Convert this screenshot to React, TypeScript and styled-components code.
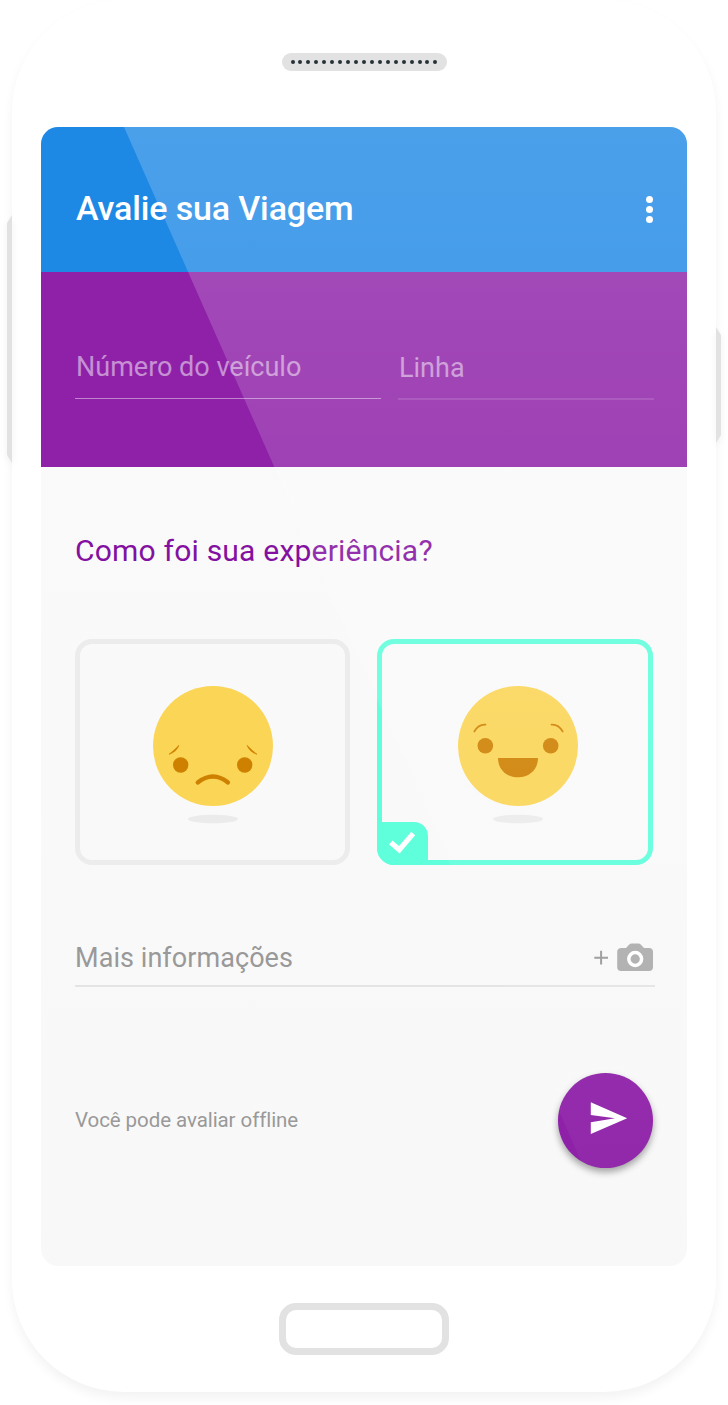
import React from 'react';
import styled, { createGlobalStyle, css } from 'styled-components';

const GlobalStyle = createGlobalStyle`
  *, *::before, *::after { box-sizing: border-box; }
  body {
    margin: 0;
    background: #fff;
    font-family: Roboto, "Liberation Sans", sans-serif;
  }
  h1, h2, p { margin: 0; font-weight: 400; }
  button { font: inherit; border: 0; padding: 0; background: none; }
`;

const Stage = styled.main`
  width: 728px;
  height: 1405px;
  padding: 0 12px;
  overflow: hidden;
`;

const Phone = styled.div`
  position: relative;
  width: 704px;
  height: 1392px;
  padding: 53px 29px 0;
  display: flex;
  flex-direction: column;
  align-items: center;
  background: #fff;
  border-radius: 112px;
  box-shadow: 0 6px 11px rgba(0, 0, 0, 0.05);
`;

const SideKey = styled.span<{ $side: 'left' | 'right'; $top: number; $height: number }>`
  position: absolute;
  top: ${p => p.$top}px;
  ${p => p.$side}: -5px;
  width: 5px;
  height: ${p => p.$height}px;
  filter: drop-shadow(0 3px 3px rgba(0, 0, 0, 0.05));

  &::before {
    content: '';
    display: block;
    height: 100%;
    background: #e2e2e2;
    clip-path: ${p =>
      p.$side === 'left'
        ? 'polygon(0 8px, 100% 0, 100% 100%, 0 calc(100% - 8px))'
        : 'polygon(0 0, 100% 8px, 100% calc(100% - 8px), 0 100%)'};
  }
`;

const Speaker = styled.div`
  width: 165px;
  height: 18px;
  padding: 0 9px;
  display: flex;
  align-items: center;
  justify-content: space-between;
  background: #e2e2e2;
  border-radius: 9px;
`;

const SpeakerHole = styled.i`
  width: 4px;
  height: 4px;
  background: #263238;
  border-radius: 50%;
`;

const Screen = styled.div`
  position: relative;
  width: 646px;
  height: 1139px;
  margin-top: 56px;
  display: flex;
  flex-direction: column;
  background: linear-gradient(#fafafa, #f9f9f9 60%, #f8f8f8);
  border-radius: 17px;
  overflow: hidden;
`;

const Gloss = styled.div`
  position: absolute;
  inset: 0;
  pointer-events: none;
  background: linear-gradient(rgba(255, 255, 255, 0.2), rgba(255, 255, 255, 0.02));
  clip-path: polygon(83px 0, 100% 0, 100% 100%, 586.5px 100%);
`;

const AppBar = styled.header`
  height: 145px;
  flex: none;
  padding: 18px 34px 0 35px;
  display: flex;
  align-items: center;
  justify-content: space-between;
  background: #1e88e5;
`;

const Title = styled.h1`
  margin-bottom: 2px;
  color: #fff;
  font-size: 34px;
  line-height: 40px;
  font-weight: 500;
  letter-spacing: -0.14px;
`;

const MenuButton = styled.button`
  display: flex;
  flex-direction: column;
  gap: 3px;
  margin-top: 1px;
`;

const MenuDot = styled.i`
  width: 7px;
  height: 7px;
  background: #fff;
  border-radius: 50%;
`;

const VehicleForm = styled.section`
  height: 195px;
  flex: none;
  padding: 77px 33px 0 34px;
  display: grid;
  grid-template-columns: 306px 256px;
  justify-content: space-between;
  align-items: start;
  background: #8e21a8;
`;

const Field = styled.div<{ $faint?: boolean }>`
  height: ${p => (p.$faint ? 51 : 50)}px;
  padding: ${p => (p.$faint ? 1 : 0)}px 0 0 1px;
  color: rgba(255, 255, 255, 0.5);
  font-size: 27px;
  line-height: 36px;
  border-bottom: ${p => (p.$faint ? '2px solid rgba(255,255,255,0.13)' : '1px solid rgba(255,255,255,0.45)')};
`;

const Content = styled.section`
  flex: 1;
  padding: 65px 34px 0;
  display: flex;
  flex-direction: column;
`;

const Question = styled.h2`
  color: #8310a0;
  font-size: 30px;
  line-height: 38px;
  letter-spacing: 0.21px;
`;

const Ratings = styled.div`
  margin-top: 69px;
  display: flex;
  gap: 27px;
`;

const RatingCard = styled.button<{ $selected?: boolean }>`
  position: relative;
  width: 275px;
  height: 226px;
  padding-top: 42px;
  display: flex;
  justify-content: center;
  align-items: flex-start;
  border: 5px solid #ececec;
  border-radius: 17px;
  ${p =>
    p.$selected &&
    css`
      width: 276px;
      padding-left: 6px;
      border-color: #5fffdc;
    `}
`;

const SelectedBadge = styled.span`
  position: absolute;
  left: -5px;
  bottom: -5px;
  width: 51px;
  height: 43px;
  background: #5fffdc;
  border-radius: 0 14px 0 17px;
`;

const NoteField = styled.div`
  height: 51px;
  margin-top: 71px;
  width: 580px;
  padding-right: 2px;
  display: flex;
  align-items: flex-start;
  justify-content: space-between;
  color: #999;
  font-size: 27px;
  line-height: 44px;
  letter-spacing: 0.06px;
  border-bottom: 2px solid #e4e4e4;
`;

const AttachPhoto = styled.button`
  height: 41px;
  display: flex;
  align-items: center;
`;

const SendRow = styled.footer`
  margin-top: 86px;
  display: flex;
  align-items: center;
  justify-content: space-between;
`;

const Hint = styled.p`
  margin-bottom: 1px;
  color: #999;
  font-size: 20.5px;
  line-height: 28px;
  letter-spacing: -0.07px;
  font-variant-ligatures: none;
`;

const SendButton = styled.button`
  width: 95px;
  height: 95px;
  background: #8e21a8;
  border-radius: 50%;
  box-shadow: 0 4px 7px rgba(0, 0, 0, 0.36);
`;

const HomeButton = styled.div`
  width: 170px;
  height: 52px;
  margin-top: 37px;
  border: 7px solid #e2e2e2;
  border-radius: 17px;
`;

const Drawing = styled.svg`
  display: block;
  flex: none;
`;

const SadFace = () => (
  <Drawing width="120" height="140" viewBox="0 0 120 140">
    <circle cx="60" cy="60" r="60" fill="#fbd556" />
    <circle cx="27.7" cy="79" r="7.7" fill="#ce8000" />
    <circle cx="91.7" cy="79" r="7.7" fill="#ce8000" />
    <path
      d="M16 68.3 Q20.5 65 26 59.3 Q23.5 66 16 68.3Z M104 68.3 Q99.5 65 94 59.3 Q96.5 66 104 68.3Z"
      fill="#ce8000"
      stroke="#ce8000"
      strokeWidth=".6"
    />
    <path d="M44.7 96.5 Q60 84.5 75 96.5" fill="none" stroke="#ce8000" strokeWidth="4.2" strokeLinecap="round" />
    <ellipse cx="60" cy="133" rx="25" ry="4.3" fill="#ebebeb" />
  </Drawing>
);

const HappyFace = () => (
  <Drawing width="120" height="140" viewBox="0 0 120 140">
    <circle cx="60" cy="60" r="60" fill="#fbd556" />
    <circle cx="27.3" cy="59.7" r="7.8" fill="#ce8000" />
    <circle cx="92.7" cy="59.7" r="7.8" fill="#ce8000" />
    <path
      d="M16.3 45.5 Q20.5 38 27.5 38.6 M104.7 45.5 Q100.5 38 93.5 38.6"
      fill="none"
      stroke="#ce8000"
      strokeWidth="1.7"
      strokeLinecap="round"
    />
    <path d="M40 72 H80 C80 83.5 71.5 91.3 60 91.3 C48.5 91.3 40 83.5 40 72Z" fill="#ce8000" />
    <ellipse cx="60" cy="133" rx="25" ry="4.3" fill="#ebebeb" />
  </Drawing>
);

const CheckIcon = () => (
  <Drawing width="51" height="43" viewBox="0 0 51 43">
    <path d="M13.8 20.5 L22.3 27.8 L36.2 11.5" fill="none" stroke="#fff" strokeWidth="5.2" />
  </Drawing>
);

const AttachIcon = () => (
  <Drawing width="60" height="28" viewBox="0 0 60 28">
    <path d="M1.3 14.7 H15 M8.1 7.8 V21.6" stroke="#999" strokeWidth="2" fill="none" />
    <path
      d="M28.5 5 H33 L36 1.7 Q37.2 .5 38.7 .5 H45.3 Q46.8 .5 48 1.7 L51 5 H56 Q60 5 60 9 V24 Q60 28 56 28 H28.2 Q24.2 28 24.2 24 V9 Q24.2 5 28.5 5Z"
      fill="#adadad"
    />
    <circle cx="42.2" cy="16" r="6.4" fill="none" stroke="#fff" strokeWidth="3.5" />
  </Drawing>
);

const SendIcon = () => (
  <Drawing width="95" height="95" viewBox="0 0 95 95">
    <path d="M32.8 29.3 L69.2 45.3 L32.8 61 V49.2 L57 45.3 L32.8 42Z" fill="#fff" />
  </Drawing>
);

export default function App() {
  return (
    <>
      <GlobalStyle />
      <Stage>
        <Phone>
          <SideKey $side="left" $top={215} $height={248} />
          <SideKey $side="right" $top={327} $height={116} />
          <Speaker>
            {Array.from({ length: 19 }, (_, i) => (
              <SpeakerHole key={i} />
            ))}
          </Speaker>
          <Screen>
            <AppBar>
              <Title>Avalie sua Viagem</Title>
              <MenuButton aria-label="Menu">
                <MenuDot />
                <MenuDot />
                <MenuDot />
              </MenuButton>
            </AppBar>
            <VehicleForm>
              <Field>Número do veículo</Field>
              <Field $faint>Linha</Field>
            </VehicleForm>
            <Content>
              <Question>Como foi sua experiência?</Question>
              <Ratings>
                <RatingCard aria-label="Ruim">
                  <SadFace />
                </RatingCard>
                <RatingCard $selected aria-label="Boa">
                  <HappyFace />
                  <SelectedBadge>
                    <CheckIcon />
                  </SelectedBadge>
                </RatingCard>
              </Ratings>
              <NoteField>
                <span>Mais informações</span>
                <AttachPhoto aria-label="Adicionar foto">
                  <AttachIcon />
                </AttachPhoto>
              </NoteField>
              <SendRow>
                <Hint>Você pode avaliar offline</Hint>
                <SendButton aria-label="Enviar">
                  <SendIcon />
                </SendButton>
              </SendRow>
            </Content>
            <Gloss />
          </Screen>
          <HomeButton />
        </Phone>
      </Stage>
    </>
  );
}
